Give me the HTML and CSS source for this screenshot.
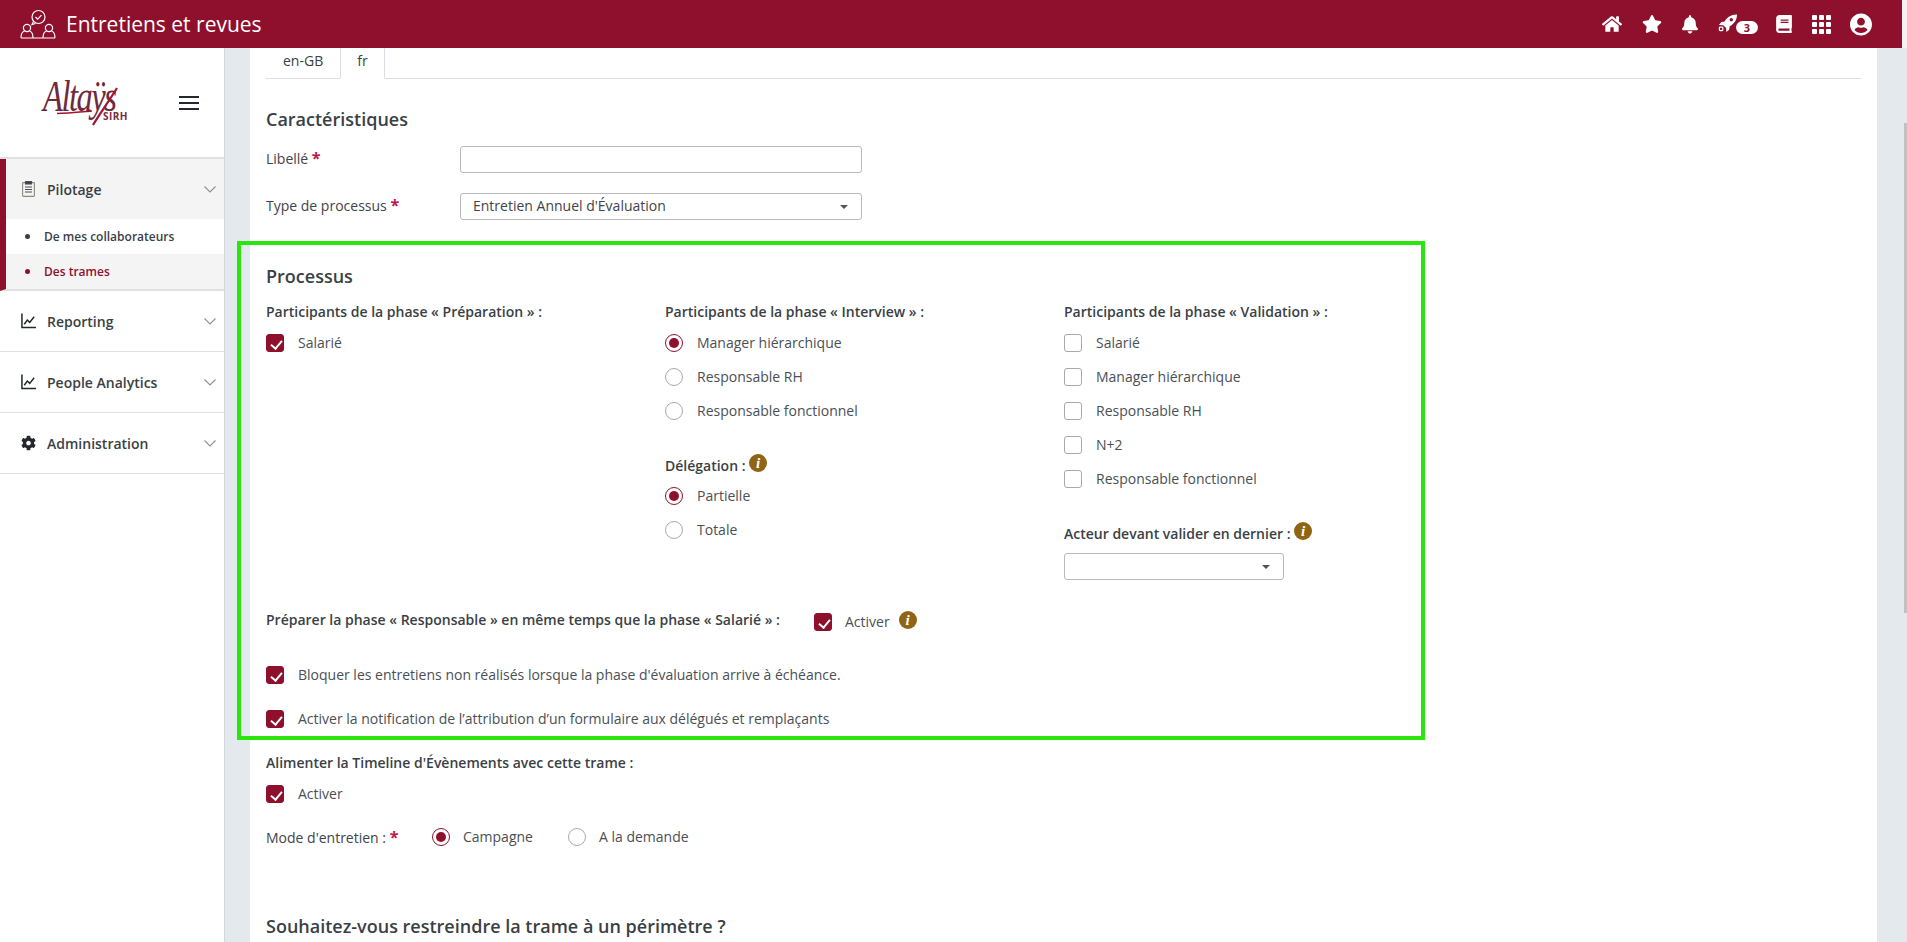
FILE: index.html
```html
<!DOCTYPE html>
<html lang="fr">
<head>
  <meta charset="UTF-8" />
  <title>Entretiens et revues</title>
  <link rel="stylesheet" href="styles.css">
</head>
<body>
  <header class="topbar">
    <div class="brand">
      <svg class="brand-icon" viewBox="0 0 36 30" fill="none" stroke="#fff" stroke-width="1.2">
        <circle cx="18.5" cy="8" r="6.5"/>
        <path d="M15.5 8l2.2 2.2 3.8-4"/>
        <path d="M13.5 12.5l-1.5 3 3.5-1"/>
        <circle cx="7" cy="19" r="3.6"/>
        <path d="M1 29c0-4 2-6.5 3.5-7M13 29c0-4-2-6.5-3.5-7"/>
        <circle cx="29" cy="19" r="3.6"/>
        <path d="M23 29c0-4 2-6.5 3.5-7M35 29c0-4-2-6.5-3.5-7"/>
        <path d="M1 29h34"/>
      </svg>
      <span>Entretiens et revues</span>
    </div>
    <nav class="top-icons">
      <svg class="ico-home" viewBox="0 0 576 512"><path d="M280.37 148.26L96 300.11V464a16 16 0 0 0 16 16l112.06-.29a16 16 0 0 0 15.92-16V368a16 16 0 0 1 16-16h64a16 16 0 0 1 16 16v95.64a16 16 0 0 0 16 16.05L464 480a16 16 0 0 0 16-16V300L295.67 148.26a12.19 12.19 0 0 0-15.3 0zM571.6 251.47L488 182.56V44.05a12 12 0 0 0-12-12h-56a12 12 0 0 0-12 12v72.61L318.47 43a48 48 0 0 0-61 0L4.34 251.47a12 12 0 0 0-1.6 16.9l25.5 31A12 12 0 0 0 45.15 301l235.22-193.74a12.19 12.19 0 0 1 15.3 0L530.9 301a12 12 0 0 0 16.9-1.6l25.5-31a12 12 0 0 0-1.7-16.93z"/></svg>
      <svg class="ico-star" viewBox="0 0 576 512"><path d="M259.3 17.8L194 150.2 47.9 171.5c-26.2 3.8-36.7 36.1-17.7 54.6l105.7 103-25 145.5c-4.5 26.3 23.2 46 46.4 33.7L288 439.6l130.7 68.7c23.2 12.2 50.9-7.4 46.4-33.7l-25-145.5 105.7-103c19-18.5 8.5-50.8-17.7-54.6L382 150.2 316.7 17.8c-11.7-23.6-45.6-23.9-57.4 0z"/></svg>
      <svg class="ico-bell" viewBox="0 0 448 512"><path d="M224 512c35.32 0 63.97-28.65 63.97-64H160.03c0 35.35 28.65 64 63.97 64zm215.39-149.71c-19.32-20.76-55.47-51.99-55.47-154.29 0-77.7-54.48-139.9-127.94-155.16V32c0-17.67-14.32-32-31.98-32s-31.98 14.33-31.98 32v20.84C118.56 68.1 64.08 130.3 64.08 208c0 102.3-36.15 133.53-55.47 154.29-6 6.45-8.66 14.16-8.61 21.71.11 16.4 12.98 32 32.1 32h383.8c19.12 0 32-15.6 32.1-32 .05-7.55-2.61-15.27-8.61-21.71z"/></svg>
      <span class="rocket">
        <svg class="ico-rocket" viewBox="0 0 20 20"><path fill-rule="evenodd" d="M19.5.5C13.5.5 9.5 3.5 7 8L3.5 8.5 1 11.5l4.5.3 3 3 .3 4.2 3-2.5.5-3.5c4.5-2.5 7.7-6.5 7.7-12.5zM14 4.2a1.8 1.8 0 1 1 0 3.6 1.8 1.8 0 0 1 0-3.6z"/><rect x="1.5" y="13.7" width="3.6" height="3.8" rx=".8" fill="none" stroke="#fff" stroke-width="1.3"/></svg>
        <b class="badge">3</b>
      </span>
      <svg class="ico-book" viewBox="0 0 448 512"><path d="M448 360V24c0-13.3-10.7-24-24-24H96C43 0 0 43 0 96v320c0 53 43 96 96 96h328c13.3 0 24-10.7 24-24v-16c0-7.5-3.5-14.3-8.9-18.7-4.2-15.4-4.2-59.3 0-74.7 5.4-4.3 8.9-11.1 8.9-18.6zM128 134c0-3.3 2.7-6 6-6h212c3.3 0 6 2.7 6 6v20c0 3.3-2.7 6-6 6H134c-3.3 0-6-2.7-6-6v-20zm0 64c0-3.3 2.7-6 6-6h212c3.3 0 6 2.7 6 6v20c0 3.3-2.7 6-6 6H134c-3.3 0-6-2.7-6-6v-20zm253.4 250H96c-17.7 0-32-14.3-32-32 0-17.6 14.4-32 32-32h285.4c-1.9 17.1-1.9 46.9 0 64z"/></svg>
      <svg class="ico-grid" viewBox="0 0 19 19"><rect width="5" height="5" rx="1"/><rect x="7" width="5" height="5" rx="1"/><rect x="14" width="5" height="5" rx="1"/><rect y="7" width="5" height="5" rx="1"/><rect x="7" y="7" width="5" height="5" rx="1"/><rect x="14" y="7" width="5" height="5" rx="1"/><rect y="14" width="5" height="5" rx="1"/><rect x="7" y="14" width="5" height="5" rx="1"/><rect x="14" y="14" width="5" height="5" rx="1"/></svg>
      <svg class="ico-user" viewBox="0 0 496 512"><path d="M248 8C111 8 0 119 0 256s111 248 248 248 248-111 248-248S385 8 248 8zm0 96c48.6 0 88 39.4 88 88s-39.4 88-88 88-88-39.4-88-88 39.4-88 88-88zm0 344c-58.7 0-111.3-26.6-146.5-68.2 18.8-35.4 55.6-59.8 98.5-59.8 2.4 0 4.8.4 7.1 1.1 13 4.2 26.6 6.9 40.9 6.9 14.3 0 28-2.7 40.9-6.9 2.3-.7 4.7-1.1 7.1-1.1 42.9 0 79.7 24.4 98.5 59.8C359.3 421.4 306.7 448 248 448z"/></svg>
    </nav>
  </header>

  <div class="scrollbar"><div class="thumb"></div></div>

  <div class="layout">
    <aside class="sidebar">
      <div class="logo-zone">
        <div class="logo">
          <span class="logo-name">Altaÿs</span>
          <svg class="logo-swash" viewBox="0 0 85 48" fill="none" stroke="#a3142f"><path d="M14 34.500c10 0 24-1.500 35-2.500" stroke-width="1.4"/><path d="M50 46c6-10 16-24 24-37" stroke-width="2.2"/></svg>
          <span class="logo-sub">SIRH</span>
        </div>
        <div class="burger"><i></i><i></i><i></i></div>
      </div>

      <div class="menu-group open">
        <div class="menu-item">
          <svg class="menu-ico clip" viewBox="0 0 13 16" fill="none" stroke="#4a4f55" stroke-width="1.1"><rect x=".6" y="1.6" width="11.800" height="13.800" rx=".8" stroke="#8a8a80"/><rect x="3.500" y=".5" width="6" height="2.500" fill="#3a3f45"/><path d="M3 6h7M3 8.500h7M3 11h7"/></svg>
          <span>Pilotage</span>
          <svg class="chev" viewBox="0 0 12 7"><path d="M.5.5L6 6 11.500.5"/></svg>
        </div>
        <a class="sub">De mes collaborateurs</a>
        <a class="sub current">Des trames</a>
      </div>

      <div class="menu-item">
        <svg class="menu-ico" viewBox="0 0 16 16" fill="none" stroke="#24282c" stroke-width="1.6"><path d="M1 0v15h15"/><path d="M3.500 11.500l3.200-4.500 2.600 2.500L14 3.500"/></svg>
        <span>Reporting</span>
        <svg class="chev" viewBox="0 0 12 7"><path d="M.5.5L6 6 11.500.5"/></svg>
      </div>
      <div class="menu-item">
        <svg class="menu-ico" viewBox="0 0 16 16" fill="none" stroke="#24282c" stroke-width="1.6"><path d="M1 0v15h15"/><path d="M3.500 11.500l3.200-4.500 2.600 2.500L14 3.500"/></svg>
        <span>People Analytics</span>
        <svg class="chev" viewBox="0 0 12 7"><path d="M.5.5L6 6 11.500.5"/></svg>
      </div>
      <div class="menu-item">
        <svg class="menu-ico" viewBox="0 0 512 512" fill="#24282c"><path d="M487.4 315.7l-42.6-24.6c4.3-23.2 4.3-47 0-70.2l42.6-24.6c4.9-2.8 7.1-8.6 5.5-14-11.1-35.6-30-67.8-54.7-94.6-3.8-4.1-10-5.1-14.8-2.3L380.8 110c-17.9-15.4-38.5-27.3-60.8-35.1V25.8c0-5.6-3.9-10.5-9.4-11.7-36.7-8.2-74.3-7.8-109.2 0-5.5 1.2-9.4 6.1-9.4 11.7V75c-22.2 7.9-42.8 19.8-60.8 35.1L88.7 85.5c-4.9-2.8-11-1.9-14.8 2.3-24.7 26.7-43.6 58.9-54.7 94.6-1.7 5.4.6 11.2 5.5 14L67.3 221c-4.3 23.2-4.3 47 0 70.2l-42.6 24.6c-4.9 2.8-7.1 8.6-5.5 14 11.1 35.6 30 67.8 54.7 94.6 3.8 4.1 10 5.1 14.8 2.3l42.6-24.6c17.9 15.4 38.5 27.3 60.8 35.1v49.2c0 5.6 3.9 10.5 9.4 11.7 36.7 8.2 74.3 7.8 109.2 0 5.5-1.2 9.4-6.1 9.4-11.7v-49.2c22.2-7.9 42.8-19.8 60.8-35.1l42.6 24.6c4.9 2.8 11 1.9 14.8-2.3 24.7-26.7 43.6-58.9 54.7-94.6 1.5-5.5-.7-11.3-5.6-14.1zM256 336c-44.1 0-80-35.9-80-80s35.9-80 80-80 80 35.9 80 80-35.9 80-80 80z"/></svg>
        <span>Administration</span>
        <svg class="chev" viewBox="0 0 12 7"><path d="M.5.5L6 6 11.500.5"/></svg>
      </div>
    </aside>

    <main class="card">
      <div class="tabs">
        <a class="tab">en-GB</a>
        <a class="tab active">fr</a>
      </div>

      <h3 class="title first">Caractéristiques</h3>
      <div class="field">
        <label>Libellé <em>*</em></label>
        <div class="input"></div>
      </div>
      <div class="field">
        <label>Type de processus <em>*</em></label>
        <div class="input select">Entretien Annuel d'Évaluation<i class="caret"></i></div>
      </div>

      <div class="annotated">
        <div class="green-box"></div>
        <h3 class="title">Processus</h3>
        <div class="columns">
          <div class="col">
            <p class="head">Participants de la phase « Préparation » :</p>
            <div class="opt"><i class="check on"></i>Salarié</div>
          </div>
          <div class="col">
            <p class="head">Participants de la phase « Interview » :</p>
            <div class="opt"><i class="radio on"></i>Manager hiérarchique</div>
            <div class="opt"><i class="radio"></i>Responsable RH</div>
            <div class="opt"><i class="radio"></i>Responsable fonctionnel</div>
            <p class="head sub-head">Délégation : <i class="info">i</i></p>
            <div class="opt"><i class="radio on"></i>Partielle</div>
            <div class="opt"><i class="radio"></i>Totale</div>
          </div>
          <div class="col">
            <p class="head">Participants de la phase « Validation » :</p>
            <div class="opt"><i class="check"></i>Salarié</div>
            <div class="opt"><i class="check"></i>Manager hiérarchique</div>
            <div class="opt"><i class="check"></i>Responsable RH</div>
            <div class="opt"><i class="check"></i>N+2</div>
            <div class="opt"><i class="check"></i>Responsable fonctionnel</div>
            <p class="head sub-head">Acteur devant valider en dernier : <i class="info">i</i></p>
            <div class="input select small"><i class="caret"></i></div>
          </div>
        </div>
        <div class="prep-row">
          <p class="head">Préparer la phase « Responsable » en même temps que la phase « Salarié » :</p>
          <div class="opt tight"><i class="check on"></i>Activer</div>
          <i class="info">i</i>
        </div>
        <div class="opt block"><i class="check on"></i>Bloquer les entretiens non réalisés lorsque la phase d'évaluation arrive à échéance.</div>
        <div class="opt block"><i class="check on"></i>Activer la notification de l’attribution d’un formulaire aux délégués et remplaçants</div>
      </div>

      <p class="head timeline">Alimenter la Timeline d'Évènements avec cette trame :</p>
      <div class="opt"><i class="check on"></i>Activer</div>
      <div class="mode-row">
        <label>Mode d'entretien : <em>*</em></label>
        <div class="opt"><i class="radio on"></i>Campagne</div>
        <div class="opt"><i class="radio"></i>A la demande</div>
      </div>

      <h3 class="title scope">Souhaitez-vous restreindre la trame à un périmètre ?</h3>
    </main>
  </div>
</body>
</html>
```

FILE: styles.css
```css
* {
  box-sizing: border-box;
}
html, body {
  height: 100%;
  overflow: hidden;
}
body {
  margin: 0;
  font-family: "Open Sans", sans-serif;
  font-size: 14px;
  color: #3f444a;
  background-color: #e4e9ed;
  display: flex;
  flex-direction: column;
}

/* top bar */
.topbar {
  height: 48px;
  flex: none;
  margin-right: 5px;
  background-color: #8f102d;
  color: #fff;
  display: flex;
  align-items: center;
  justify-content: space-between;
}
.brand {
  display: flex;
  align-items: center;
  padding-left: 20px;
  font-size: 21px;
}
.brand-icon {
  width: 36px;
  height: 30px;
  margin-right: 10px;
}
.top-icons {
  display: flex;
  align-items: center;
  padding-right: 30px;
  fill: #fff;
}
.top-icons svg {
  display: block;
}
.ico-home { width: 20px; height: 18px; margin-right: 20px; }
.ico-star { width: 20px; height: 18px; margin-right: 20px; }
.ico-bell { width: 16px; height: 19px; margin-right: 20px; }
.rocket { display: block; position: relative; width: 40px; height: 20px; margin-right: 18px; }
.ico-rocket { width: 19px; height: 19px; }
.badge {
  position: absolute;
  left: 18px;
  top: 7px;
  width: 22px;
  height: 13px;
  border-radius: 7px;
  background-color: #fff;
  color: #8f102d;
  font-size: 11px;
  line-height: 13px;
  text-align: center;
}
.ico-book { width: 16px; height: 18px; margin-right: 20px; }
.ico-grid { width: 19px; height: 19px; margin-right: 19px; }
.ico-user { width: 22px; height: 23px; }

/* fake scrollbar */
.scrollbar {
  position: fixed;
  top: 0;
  right: 0;
  bottom: 0;
  width: 5px;
  z-index: 5;
}
.scrollbar::before {
  content: "";
  display: block;
  height: 48px;
  background-color: #f3f3f3;
}
.thumb {
  position: absolute;
  top: 123px;
  right: 0;
  width: 3px;
  height: 490px;
  background-color: #c1c1c1;
}

.layout {
  flex: 1;
  min-height: 0;
  display: flex;
}

/* sidebar */
.sidebar {
  width: 225px;
  flex: none;
  background-color: #fff;
  border-right: 1px solid #d5d8da;
}
.logo-zone {
  height: 111px;
  display: flex;
  align-items: center;
  padding-left: 43px;
  border-bottom: 2px solid #e0e0e0;
}
.logo {
  width: 85px;
  height: 48px;
  position: relative;
  color: #7c2a3e;
}
.logo-name {
  display: block;
  margin-top: 3px;
  height: 30px;
  font-family: "Liberation Serif", serif;
  font-style: italic;
  font-size: 44px;
  line-height: 30px;
  letter-spacing: -2px;
  color: #6e2a3c;
  transform-origin: left top;
  transform: scaleX(.74);
}
.logo-swash {
  position: absolute;
  left: 0;
  top: 0;
  width: 85px;
  height: 48px;
}
.logo-sub {
  position: absolute;
  right: 0;
  top: 33px;
  font-size: 10px;
  line-height: 8px;
  font-weight: 700;
  letter-spacing: .5px;
}
.burger {
  margin-left: 51px;
  width: 20px;
  display: flex;
  flex-direction: column;
  gap: 4px;
}
.burger i {
  display: block;
  height: 2px;
  background-color: #24282c;
}
.menu-item {
  height: 61px;
  display: flex;
  align-items: center;
  padding: 0 8px 0 21px;
  border-bottom: 1px solid #e0e0e0;
  font-weight: 600;
  color: #3a3f45;
}
.menu-item span {
  flex: 1;
}
.menu-ico {
  width: 15px;
  height: 16px;
  margin-right: 11px;
}
.chev {
  width: 12px;
  height: 7px;
  fill: none;
  stroke: #8a9096;
  stroke-width: 1.1;
}
.menu-group.open {
  border-left: 6px solid #8f102d;
  border-bottom: 2px solid #e0e0e0;
}
.open .menu-item {
  height: 60px;
  background-color: #f4f4f4;
  border-bottom: 0;
  padding-left: 15px;
}
.sub {
  display: block;
  height: 35px;
  line-height: 35px;
  padding-left: 38px;
  font-size: 12px;
  font-weight: 600;
  color: #3a3f45;
  position: relative;
}
.sub::before {
  content: "";
  position: absolute;
  left: 19px;
  top: 15px;
  width: 5px;
  height: 5px;
  border-radius: 50%;
  background-color: currentColor;
}
.sub.current {
  background-color: #f4f4f4;
  color: #8f102d;
}

/* main card */
.card {
  flex: 1;
  min-width: 0;
  margin: 0 30px 0 25px;
  padding: 0 16px;
  background-color: #fff;
}
.tabs {
  height: 31px;
  display: flex;
  border-bottom: 1px solid #dfdde3;
}
.tab {
  padding: 3px 17px 0;
  height: 31px;
  color: #3a3f45;
}
.tab.active {
  height: 31px;
  border: 1px solid #dfdde3;
  border-top: 0;
  border-bottom: 1px solid #fff;
  background-color: #fff;
  padding: 3px 16px 0;
}
.title {
  margin: 0;
  font-size: 18px;
  line-height: 24px;
  font-weight: 600;
  color: #3a3f45;
}
.title.first {
  margin-top: 28px;
}
.field {
  display: flex;
  align-items: center;
  height: 27px;
  margin-top: 20px;
}
.title + .field {
  margin-top: 15px;
}
label {
  display: block;
}
.field label {
  width: 194px;
  padding-bottom: 3px;
}
em {
  color: #c2144f;
  font-style: normal;
  font-weight: 700;
  font-size: 16px;
}
.input {
  width: 402px;
  height: 27px;
  border: 1px solid #b9b9b9;
  border-radius: 3px;
  background-color: #fff;
}
.select {
  position: relative;
  padding-left: 12px;
  line-height: 23px;
}
.select.small {
  width: 220px;
  margin-top: 10px;
}
.caret {
  position: absolute;
  right: 13px;
  top: 11px;
  border: 4px solid transparent;
  border-top: 4px solid #555;
  border-bottom: 0;
}

/* green marker sits over the form */
.annotated {
  position: relative;
  margin-top: 21px;
  padding-top: 23px;
  height: 499px;
}
.green-box {
  position: absolute;
  top: 0;
  bottom: 0;
  left: -29px;
  width: 1188px;
  border: 4px solid #2ae60d;
}
.columns {
  display: grid;
  grid-template-columns: 399px 399px 1fr;
  margin-top: 14px;
}
.head {
  margin: 0;
  line-height: 20px;
  font-weight: 600;
  color: #3a3f45;
}
.sub-head {
  margin-top: 26px;
  margin-bottom: -1px;
}
.opt {
  display: flex;
  align-items: center;
  height: 34px;
  padding-bottom: 2px;
  color: #4a4f55;
}
.head + .opt {
  margin-top: 4px;
}
.check, .radio {
  flex: none;
  display: block;
  width: 18px;
  height: 18px;
  margin-right: 14px;
  margin-top: 2px;
  border: 1px solid #a9a9a9;
  position: relative;
}
.check {
  border-radius: 3px;
}
.check.on {
  background-color: #8f102d;
  border-color: #8f102d;
}
.check.on::after {
  content: "";
  position: absolute;
  left: 5.5px;
  top: 2.5px;
  width: 5px;
  height: 9px;
  border: solid #fff;
  border-width: 0 2px 2px 0;
  transform: rotate(40deg);
}
.radio {
  border-radius: 50%;
}
.radio.on {
  border-color: #8f102d;
}
.radio.on::after {
  content: "";
  position: absolute;
  left: 3px;
  top: 3px;
  width: 10px;
  height: 10px;
  border-radius: 50%;
  background-color: #8f102d;
}
.info {
  display: inline-block;
  width: 18px;
  height: 18px;
  border-radius: 50%;
  background-color: #8f6414;
  color: #fff;
  font-family: "Liberation Serif", serif;
  font-style: italic;
  font-weight: 700;
  font-size: 15px;
  line-height: 18px;
  text-align: center;
  vertical-align: 3px;
}
.prep-row {
  position: absolute;
  top: 362px;
  left: 0;
  display: flex;
  align-items: center;
  height: 34px;
}
.prep-row .head {
  width: 548px;
}
.prep-row .opt {
  margin-right: 9px;
}
.prep-row .check {
  margin-right: 13px;
}
.opt.block {
  position: absolute;
  left: 0;
}
.opt.block:nth-last-child(2) { top: 417px; }
.opt.block:last-child { top: 461px; }
.timeline {
  margin-top: 13px;
}
.mode-row {
  display: flex;
  align-items: center;
  height: 34px;
  margin-top: 9px;
}
.mode-row label {
  width: 166px;
}
.mode-row .opt + .opt {
  margin-left: 35px;
}
.mode-row .radio {
  margin-right: 13px;
}
.scope {
  margin-top: 60px;
}
```
